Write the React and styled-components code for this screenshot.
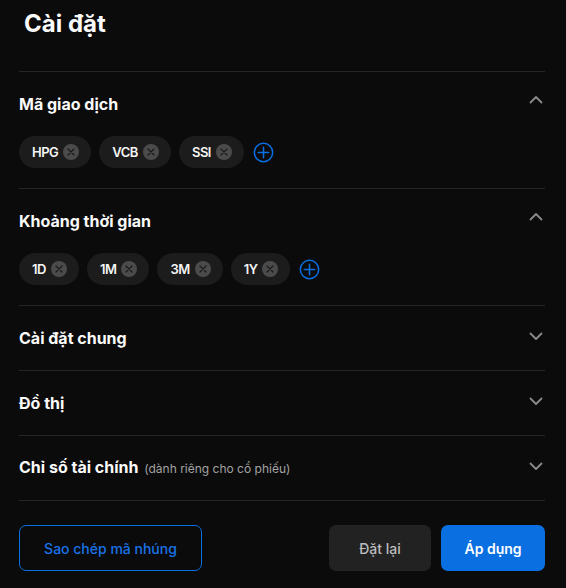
import React from "react";
import styled, { createGlobalStyle } from "styled-components";

const Global = createGlobalStyle`
  html, body { margin: 0; padding: 0; background: #0b0b0b; }
  body { font-family: Inter, "Noto Sans", sans-serif; color: #f5f5f5; }
  * { box-sizing: border-box; }
`;

const Page = styled.div`
  width: 566px;
  height: 588px;
  background: #0b0b0b;
  padding: 0 21px 0 19px;
  display: flex;
  flex-direction: column;
`;

const Title = styled.h1`
  margin: 0;
  padding: 9px 0 0 5px;
  height: 71px;
  font-size: 24px;
  font-weight: 700;
  line-height: 30px;
  color: #fafafa;
`;

const Section = styled.div`
  border-top: 1px solid #262626;
  padding-bottom: ${(p) => (p.$open ? "20px" : "0")};
`;

const Header = styled.div`
  display: flex;
  align-items: center;
  justify-content: space-between;
  padding: 20px 0;
  height: 64px;
`;

const HeaderTitle = styled.div`
  font-size: 16px;
  font-weight: 700;
  line-height: 24px;
  color: #fafafa;
`;

const Sub = styled.span`
  font-size: 12px;
  font-weight: 400;
  color: #a3a3a3;
  margin-left: 2px;
`;

const Chevron = styled.svg`
  width: 14px;
  height: 14px;
  margin-right: 2px;
  color: #8a8a8a;
  ${(p) => (p.$up ? "margin-top: -8px;" : "margin-top: -4px;")}
`;

const Chips = styled.div`
  display: flex;
  align-items: center;
  gap: 8px;
`;

const Chip = styled.div`
  height: 32px;
  border-radius: 16px;
  background: #1c1c1c;
  display: flex;
  align-items: center;
  gap: 5px;
  padding: 0 12px 0 13px;
  font-size: 13px;
  font-weight: 600;
  letter-spacing: -0.5px;
  color: #f5f5f5;
`;

const Remove = styled.span`
  width: 16px;
  height: 16px;
  border-radius: 50%;
  background: #4b4b4b;
  display: flex;
  align-items: center;
  justify-content: center;
`;

const AddBtn = styled.svg`
  width: 21px;
  height: 21px;
  margin-left: 1px;
`;

const Footer = styled.div`
  border-top: 1px solid #262626;
  padding-top: 24px;
  display: flex;
  align-items: center;
  gap: 10px;
`;

const Button = styled.button`
  height: 46px;
  border-radius: 7px;
  font-family: Inter, "Noto Sans", sans-serif;
  font-size: 14px;
  font-weight: ${(p) => (p.$variant === "primary" ? 600 : 500)};
  cursor: pointer;
  width: ${(p) => p.$w}px;
  border: 1px solid
    ${(p) => (p.$variant === "outline" ? "#0a6fe0" : "transparent")};
  background: ${(p) =>
    p.$variant === "primary" ? "#0a6fe0" : p.$variant === "ghost" ? "#222222" : "transparent"};
  color: ${(p) =>
    p.$variant === "primary" ? "#ffffff" : p.$variant === "ghost" ? "#bdbdbd" : "#1a73e8"};
  margin-right: ${(p) => (p.$push ? "auto" : "0")};
`;

const XIcon = () => (
  <svg width="8" height="8" viewBox="0 0 8 8">
    <path d="M1 1L7 7M7 1L1 7" stroke="#1a1a1a" strokeWidth="1.2" strokeLinecap="round" />
  </svg>
);

const ChevronIcon = ({ up }) => (
  <Chevron $up={up} viewBox="0 0 14 14" fill="none">
    <path
      d={up ? "M1.5 9.5L7 4L12.5 9.5" : "M1.5 4.5L7 10L12.5 4.5"}
      stroke="currentColor"
      strokeWidth="1.8"
      strokeLinecap="round"
      strokeLinejoin="round"
    />
  </Chevron>
);

const PlusIcon = () => (
  <AddBtn viewBox="0 0 22 22" fill="none">
    <circle cx="11" cy="11" r="9.6" stroke="#0a6fe0" strokeWidth="1.6" />
    <path d="M11 5.5V16.5M5.5 11H16.5" stroke="#0a6fe0" strokeWidth="1.6" strokeLinecap="round" />
  </AddBtn>
);

const ChipList = ({ items }) => (
  <Chips>
    {items.map((t) => (
      <Chip key={t}>
        {t}
        <Remove>
          <XIcon />
        </Remove>
      </Chip>
    ))}
    <PlusIcon />
  </Chips>
);

export default function App() {
  return (
    <>
      <Global />
      <Page>
        <Title>Cài đặt</Title>
        <Section $open>
          <Header>
            <HeaderTitle>Mã giao dịch</HeaderTitle>
            <ChevronIcon up />
          </Header>
          <ChipList items={["HPG", "VCB", "SSI"]} />
        </Section>
        <Section $open>
          <Header>
            <HeaderTitle>Khoảng thời gian</HeaderTitle>
            <ChevronIcon up />
          </Header>
          <ChipList items={["1D", "1M", "3M", "1Y"]} />
        </Section>
        <Section>
          <Header>
            <HeaderTitle>Cài đặt chung</HeaderTitle>
            <ChevronIcon />
          </Header>
        </Section>
        <Section>
          <Header>
            <HeaderTitle>Đồ thị</HeaderTitle>
            <ChevronIcon />
          </Header>
        </Section>
        <Section>
          <Header>
            <HeaderTitle>
              Chỉ số tài chính <Sub>(dành riêng cho cổ phiếu)</Sub>
            </HeaderTitle>
            <ChevronIcon />
          </Header>
        </Section>
        <Footer>
          <Button $variant="outline" $w={183} $push>
            Sao chép mã nhúng
          </Button>
          <Button $variant="ghost" $w={102}>
            Đặt lại
          </Button>
          <Button $variant="primary" $w={104}>
            Áp dụng
          </Button>
        </Footer>
      </Page>
    </>
  );
}
